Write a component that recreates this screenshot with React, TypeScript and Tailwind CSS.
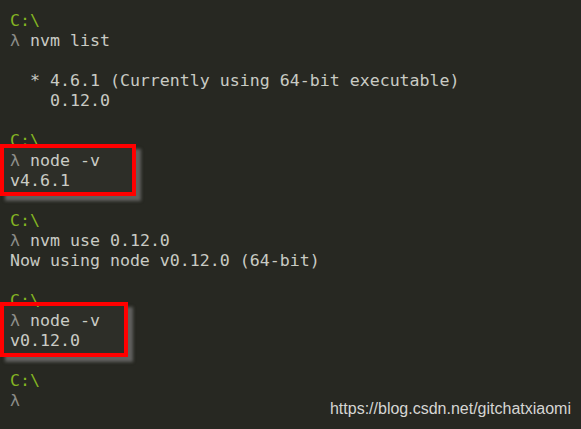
import React from "react";

type Line = { kind: "path" | "cmd" | "out" | "blank"; text?: string };

const lines: Line[] = [
  { kind: "path", text: "C:\\" },
  { kind: "cmd", text: "nvm list" },
  { kind: "blank" },
  { kind: "out", text: "  * 4.6.1 (Currently using 64-bit executable)" },
  { kind: "out", text: "    0.12.0" },
  { kind: "blank" },
  { kind: "path", text: "C:\\" },
  { kind: "cmd", text: "node -v" },
  { kind: "out", text: "v4.6.1" },
  { kind: "blank" },
  { kind: "path", text: "C:\\" },
  { kind: "cmd", text: "nvm use 0.12.0" },
  { kind: "out", text: "Now using node v0.12.0 (64-bit)" },
  { kind: "blank" },
  { kind: "path", text: "C:\\" },
  { kind: "cmd", text: "node -v" },
  { kind: "out", text: "v0.12.0" },
  { kind: "blank" },
  { kind: "path", text: "C:\\" },
  { kind: "cmd", text: "" },
];

const Row = ({ line }: { line: Line }) => {
  if (line.kind === "blank") return <div className="h-[20px]" />;
  if (line.kind === "path")
    return <div className="h-[20px] text-[#84b422]">{line.text}</div>;
  if (line.kind === "cmd")
    return (
      <div className="h-[20px] text-[#c9cbc4]">
        <span className="text-[#8d8d88]">λ</span> {line.text}
      </div>
    );
  return <div className="h-[20px] text-[#c9cbc4]">{line.text}</div>;
};

const App = () => {
  return (
    <div className="relative w-full h-[429px] overflow-hidden bg-[#272822]">
      <div
        className="flex flex-col pt-[11px] pl-[10px] text-[16.6px] leading-[20px] whitespace-pre"
        style={{ fontFamily: '"DejaVu Sans Mono", "Liberation Mono", monospace' }}
      >
        {lines.map((l, i) => (
          <Row key={i} line={l} />
        ))}
      </div>

      {/* highlight boxes */}
      <div className="absolute left-0 top-[144px] w-[136px] h-[52px] border-4 border-[#ff0000] bg-white/[0.03] shadow-[5px_5px_3px_rgba(120,120,120,0.7)]" />
      <div className="absolute left-0 top-[302px] w-[128px] h-[55px] border-4 border-[#ff0000] bg-white/[0.03] shadow-[5px_5px_3px_rgba(120,120,120,0.7)]" />

      <div
        className="absolute right-[10px] top-[399px] text-[16px] leading-[20px] text-[#d6d6d4]"
        style={{ fontFamily: '"Liberation Sans", Arial, sans-serif' }}
      >
        https://blog.csdn.net/gitchatxiaomi
      </div>
    </div>
  );
};

export default App;
